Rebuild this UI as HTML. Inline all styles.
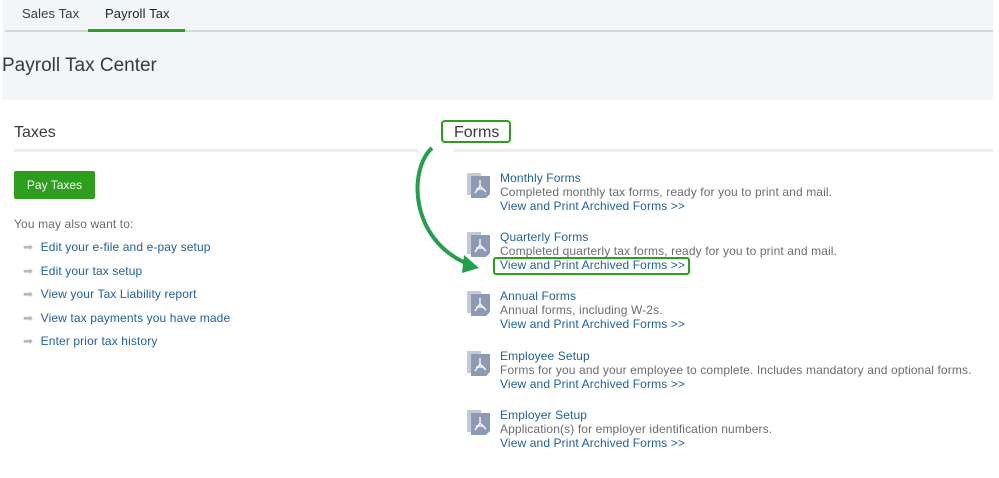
<!DOCTYPE html>
<html><head><style>
body{margin:0;width:999px;height:478px;background:#fff;font-family:"Liberation Sans",sans-serif;position:relative;overflow:hidden}
.a{position:absolute}
.lk{color:#1f5f9e}
.gr{color:#6b6c72}
.t13{font-size:12px;white-space:nowrap;letter-spacing:0.12px}
</style></head><body>
<div class="a" style="left:2px;top:0;width:991px;height:100px;background:#f4f5f8"></div>
<div class="a" style="left:5px;top:30px;width:988px;height:2px;background:#d4d7dc"></div>
<div class="a t13" style="left:22px;top:6px;color:#393a3d;font-size:13px">Sales Tax</div>
<div class="a t13" style="left:105px;top:6px;color:#1e1f21;font-size:13px">Payroll Tax</div>
<div class="a" style="left:88px;top:29px;width:97px;height:3px;background:#2ca01c"></div>
<div class="a" style="left:2px;top:55px;font-size:19px;color:#393a3d">Payroll Tax Center</div>

<div class="a" style="left:14px;top:124px;font-size:16px;color:#393a3d">Taxes</div>
<div class="a" style="left:14px;top:149px;width:405px;height:3px;background:#eceef1"></div>
<div class="a" style="left:454px;top:149px;width:539px;height:3px;background:#eceef1"></div>
<div class="a" style="left:441px;top:120px;width:70px;height:23px;border:2px solid #2ca01c;border-radius:4px;box-sizing:border-box"></div>
<div class="a" style="left:454px;top:124px;font-size:16px;color:#393a3d">Forms</div>

<div class="a" style="left:14px;top:171px;width:81px;height:28px;background:#2ca01c;border-radius:2px;color:#fff;font-size:12px;line-height:28px;text-align:center">Pay Taxes</div>
<div class="a t13 gr" style="left:14px;top:217px">You may also want to:</div>
<div class="a" style="left:23px;top:236px;line-height:23.6px;font-size:12px;letter-spacing:0.12px">
<div><span style="color:#b8b9bc">➡</span> <span class="lk" style="margin-left:4px">Edit your e-file and e-pay setup</span></div>
<div><span style="color:#b8b9bc">➡</span> <span class="lk" style="margin-left:4px">Edit your tax setup</span></div>
<div><span style="color:#b8b9bc">➡</span> <span class="lk" style="margin-left:4px">View your Tax Liability report</span></div>
<div><span style="color:#b8b9bc">➡</span> <span class="lk" style="margin-left:4px">View tax payments you have made</span></div>
<div><span style="color:#b8b9bc">➡</span> <span class="lk" style="margin-left:4px">Enter prior tax history</span></div>
</div>

<svg class="a" style="left:0;top:0" width="999" height="478">
<defs><g id="ic"><path d="M2 3h14v22H2z" fill="#c4cad6"/><path d="M6 6h19v22H6z" fill="#8e9ab4"/><path d="M21 28h4v-4z" fill="#fff"/><path d="M15 10l0 6-5 7M15 16l6 6M11 19h8" stroke="#fff" stroke-width="1.3" fill="none"/></g></defs>
<use href="#ic" x="465" y="170"/>
<use href="#ic" x="465" y="229"/>
<use href="#ic" x="465" y="288"/>
<use href="#ic" x="465" y="348"/>
<use href="#ic" x="465" y="407"/>
<path d="M432 148 C408 170 410 240 468 264" stroke="#22a04b" stroke-width="4" fill="none"/>
<path d="M464 255 L479 268 L462 273 Z" fill="#22a04b"/>
</svg>
<div class="a" style="left:493px;top:257px;width:197px;height:18px;border:2px solid #2ca01c;border-radius:3px;box-sizing:border-box"></div>

<div class="a t13" style="left:500px;top:171px;line-height:14px">
<div class="lk">Monthly Forms</div><div class="gr">Completed monthly tax forms, ready for you to print and mail.</div><div class="lk">View and Print Archived Forms &gt;&gt;</div></div>
<div class="a t13" style="left:500px;top:230px;line-height:14px">
<div class="lk">Quarterly Forms</div><div class="gr">Completed quarterly tax forms, ready for you to print and mail.</div><div class="lk">View and Print Archived Forms &gt;&gt;</div></div>
<div class="a t13" style="left:500px;top:289px;line-height:14px">
<div class="lk">Annual Forms</div><div class="gr">Annual forms, including W-2s.</div><div class="lk">View and Print Archived Forms &gt;&gt;</div></div>
<div class="a t13" style="left:500px;top:349px;line-height:14px">
<div class="lk">Employee Setup</div><div class="gr">Forms for you and your employee to complete. Includes mandatory and optional forms.</div><div class="lk">View and Print Archived Forms &gt;&gt;</div></div>
<div class="a t13" style="left:500px;top:408px;line-height:14px">
<div class="lk">Employer Setup</div><div class="gr">Application(s) for employer identification numbers.</div><div class="lk">View and Print Archived Forms &gt;&gt;</div></div>
</body></html>
